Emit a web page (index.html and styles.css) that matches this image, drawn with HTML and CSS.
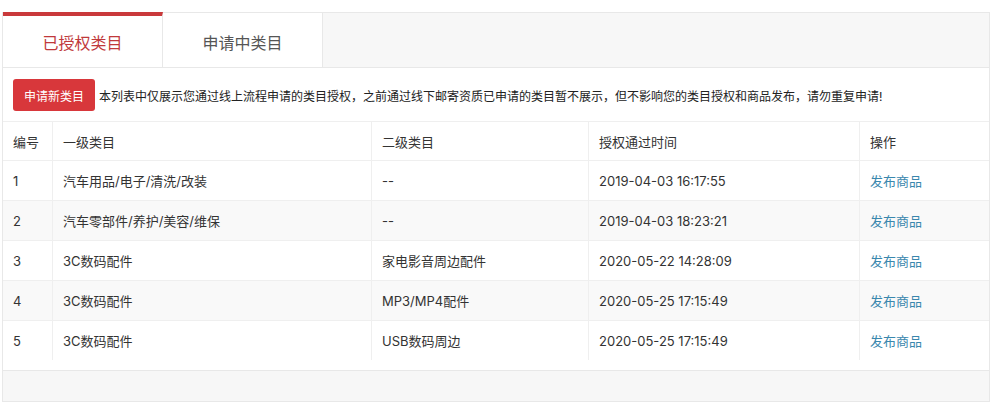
FILE: index.html
```html
<!DOCTYPE html>
<html>
<head>
  <title>类目授权</title>
  <meta charset="UTF-8">
  <link rel="stylesheet" href="styles.css">
</head>
<body>
  <div class="panel">
    <!-- tabs -->
    <div class="tabs">
      <div class="tab active">已授权类目</div>
      <div class="tab">申请中类目</div>
      <div class="tab-fill"></div>
    </div>

    <div class="notice">
      <button class="btn-apply">申请新类目</button>
      <span>本列表中仅展示您通过线上流程申请的类目授权，之前通过线下邮寄资质已申请的类目暂不展示，但不影响您的类目授权和商品发布，请勿重复申请!</span>
    </div>

    <table class="cat-table">
      <thead>
        <tr>
          <th class="c-no">编号</th>
          <th class="c-first">一级类目</th>
          <th class="c-second">二级类目</th>
          <th class="c-time">授权通过时间</th>
          <th>操作</th>
        </tr>
      </thead>
      <tbody>
        <tr>
          <td>1</td>
          <td>汽车用品/电子/清洗/改装</td>
          <td>--</td>
          <td>2019-04-03 16:17:55</td>
          <td><a href="#">发布商品</a></td>
        </tr>
        <tr>
          <td>2</td>
          <td>汽车零部件/养护/美容/维保</td>
          <td>--</td>
          <td>2019-04-03 18:23:21</td>
          <td><a href="#">发布商品</a></td>
        </tr>
        <tr>
          <td>3</td>
          <td>3C数码配件</td>
          <td>家电影音周边配件</td>
          <td>2020-05-22 14:28:09</td>
          <td><a href="#">发布商品</a></td>
        </tr>
        <tr>
          <td>4</td>
          <td>3C数码配件</td>
          <td>MP3/MP4配件</td>
          <td>2020-05-25 17:15:49</td>
          <td><a href="#">发布商品</a></td>
        </tr>
        <tr>
          <td>5</td>
          <td>3C数码配件</td>
          <td>USB数码周边</td>
          <td>2020-05-25 17:15:49</td>
          <td><a href="#">发布商品</a></td>
        </tr>
      </tbody>
    </table>

    <div class="panel-foot"></div>
  </div>
</body>
</html>
```

FILE: styles.css
```css
body {
  margin: 0;
  background: #fff;
  font-family: Inter, "Noto Sans CJK SC", sans-serif;
  color: #333;
}

.panel {
  width: 986px;
  margin: 12px 0 0 2px;
  border-left: 1px solid #e8e8e8;
  border-right: 1px solid #e8e8e8;
}

.tabs {
  display: flex;
  height: 55px;
  background: #f7f7f7;
  border-bottom: 1px solid #e8e8e8;
}

.tab {
  width: 160px;
  box-sizing: border-box;
  background: #fff;
  border-top: 1px solid #e8e8e8;
  border-right: 1px solid #e8e8e8;
  font-size: 16px;
  color: #555;
  display: flex;
  align-items: center;
  justify-content: center;
  padding-top: 3px;
}

.tab.active {
  border-top: 4px solid #c9393b;
  color: #c0393b;
  padding-top: 0;
}

.tab-fill {
  flex: 1;
  border-top: 1px solid #e8e8e8;
}

.notice {
  display: flex;
  align-items: center;
  gap: 4px;
  padding: 11px 10px 10px;
  font-size: 12px;
  color: #222;
}

.btn-apply {
  background: #d8373b;
  color: #fff;
  border: none;
  border-radius: 3px;
  height: 32px;
  padding: 0 11px;
  font-family: inherit;
  font-size: 12px;
  cursor: pointer;
}

.cat-table {
  width: 100%;
  border-collapse: collapse;
  font-size: 13px;
}

.cat-table th,
.cat-table td {
  border: 1px solid #efefef;
  text-align: left;
  font-weight: normal;
  padding: 0 10px;
  height: 39px;
  color: #333;
}

.cat-table th {
  height: 38px;
}

.cat-table th:first-child,
.cat-table td:first-child {
  border-left: none;
}

.cat-table th:last-child,
.cat-table td:last-child {
  border-right: none;
}

.cat-table tbody tr:nth-child(even) td {
  background: #f9f9f9;
}

.cat-table tbody tr:last-child td {
  border-bottom: none;
}

.c-no { width: 29px; }
.c-first { width: 298px; }
.c-second { width: 196px; }
.c-time { width: 250px; }

.cat-table a {
  color: #3a87ad;
  text-decoration: none;
}

.panel-foot {
  margin-top: 10px;
  height: 30px;
  background: #f7f7f7;
  border-top: 1px solid #e8e8e8;
  border-bottom: 1px solid #e8e8e8;
}
```
